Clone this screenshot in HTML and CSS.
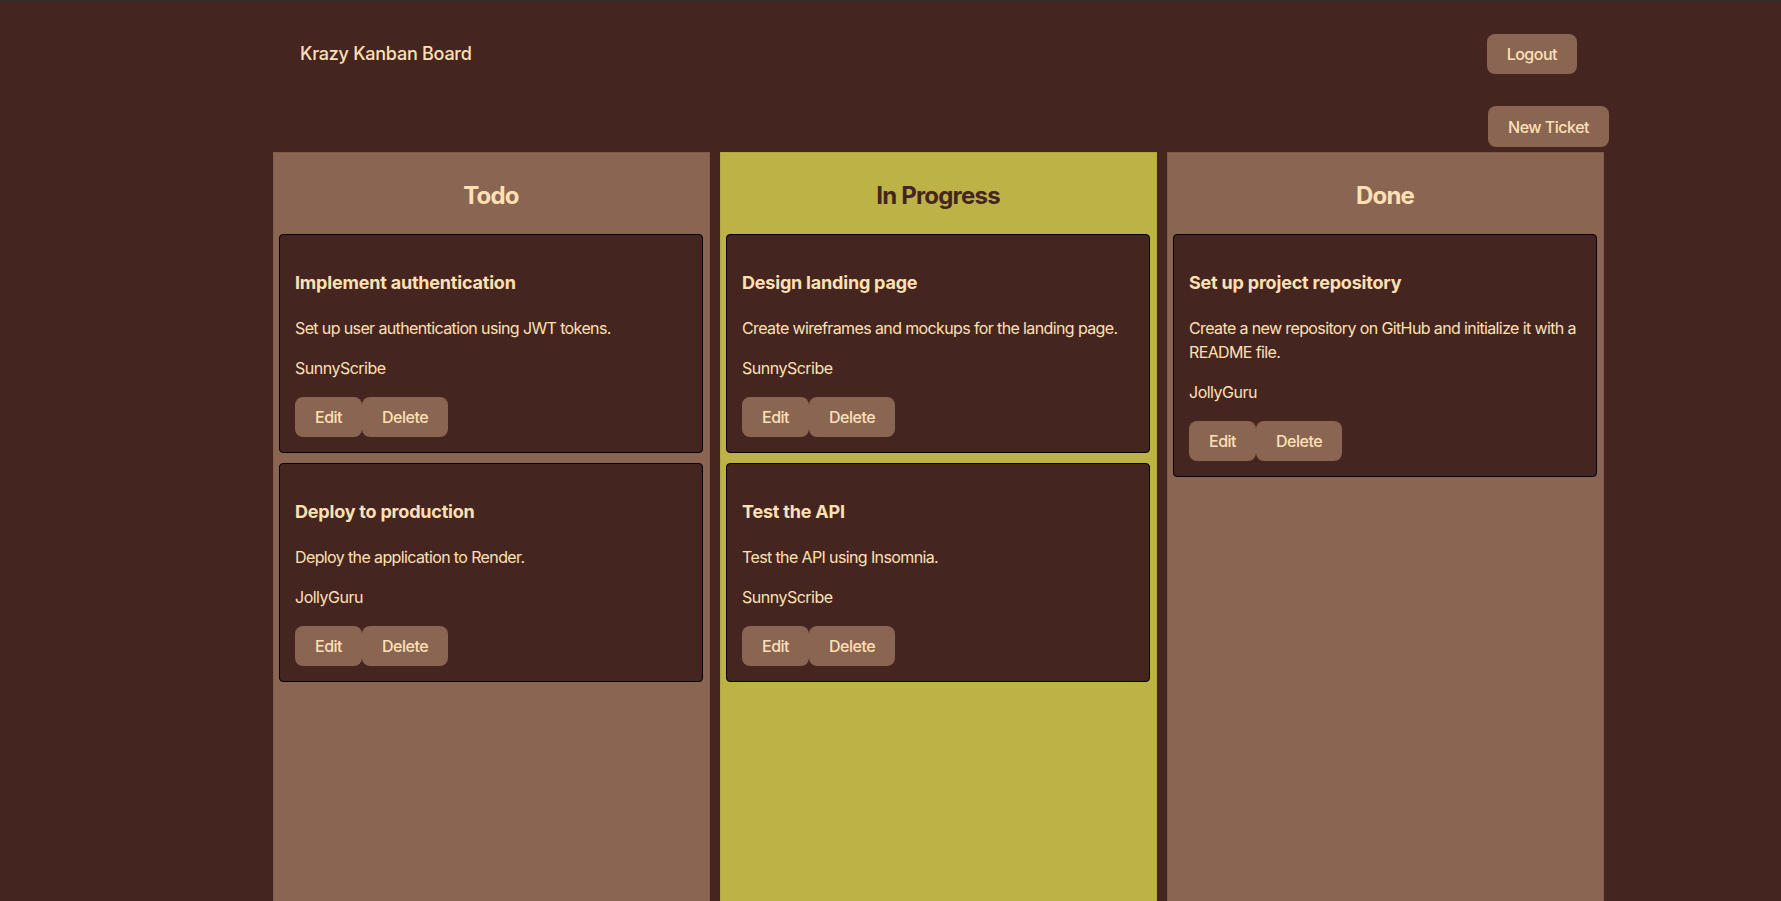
FILE: index.html
```html
<!DOCTYPE html>
<html lang="en">
<head>
<meta charset="utf-8">
<title>Krazy Kanban Board</title>
<link rel="stylesheet" href="styles.css">
</head>
<body>
<div class="page">
  <header class="nav">
    <h1 class="brand">Krazy Kanban Board</h1>
    <button class="btn">Logout</button>
  </header>
  <div class="toolbar">
    <button class="btn btn-new">New Ticket</button>
  </div>
  <main class="board">
    <section class="column">
      <h2 class="col-title">Todo</h2>
      <article class="card">
        <h3 class="card-title">Implement authentication</h3>
        <p class="card-desc">Set up user authentication using JWT tokens.</p>
        <p class="card-user">SunnyScribe</p>
        <div class="actions"><button class="btn">Edit</button><button class="btn">Delete</button></div>
      </article>
      <article class="card">
        <h3 class="card-title">Deploy to production</h3>
        <p class="card-desc">Deploy the application to Render.</p>
        <p class="card-user">JollyGuru</p>
        <div class="actions"><button class="btn">Edit</button><button class="btn">Delete</button></div>
      </article>
    </section>
    <section class="column column-progress">
      <h2 class="col-title">In Progress</h2>
      <article class="card">
        <h3 class="card-title">Design landing page</h3>
        <p class="card-desc">Create wireframes and mockups for the landing page.</p>
        <p class="card-user">SunnyScribe</p>
        <div class="actions"><button class="btn">Edit</button><button class="btn">Delete</button></div>
      </article>
      <article class="card">
        <h3 class="card-title">Test the API</h3>
        <p class="card-desc">Test the API using Insomnia.</p>
        <p class="card-user">SunnyScribe</p>
        <div class="actions"><button class="btn">Edit</button><button class="btn">Delete</button></div>
      </article>
    </section>
    <section class="column">
      <h2 class="col-title">Done</h2>
      <article class="card">
        <h3 class="card-title">Set up project repository</h3>
        <p class="card-desc">Create a new repository on GitHub and initialize it with a README file.</p>
        <p class="card-user">JollyGuru</p>
        <div class="actions"><button class="btn">Edit</button><button class="btn">Delete</button></div>
      </article>
    </section>
  </main>
</div>
</body>
</html>
```
FILE: styles.css
```css
* { box-sizing: border-box; }
html, body { height: 100%; }
body {
  margin: 0;
  background: #452520;
  border-top: 1px solid #303030;
  font-family: Inter, "Noto Sans", sans-serif;
  color: #ffe0b5;
  overflow: hidden;
}
.page {
  margin-left: 273px;
  width: 1336px;
}
.nav {
  display: flex;
  align-items: center;
  justify-content: space-between;
  padding: 32px 32px 0 27px;
  height: 73px;
}
.brand {
  margin: 0;
  font-size: 18px;
  font-weight: 500;
  line-height: 40px;
  letter-spacing: -0.25px;
}
.btn {
  font-family: inherit;
  font-size: 16px;
  font-weight: 500;
  letter-spacing: -0.5px;
  color: #ffe0b5;
  background: #8a6552;
  border: none;
  border-radius: 8px;
  padding: 10px 20px;
  line-height: 20px;
  cursor: pointer;
}
.toolbar {
  display: flex;
  justify-content: flex-end;
  margin-top: 32px;
  height: 46px;
}
.btn-new { height: 41px; }
.board {
  display: grid;
  grid-template-columns: repeat(3, 437px);
  gap: 10px;
  width: 1331px;
}
.column {
  background: #8a6552;
  border: 1px solid #7f5d4c;
  padding: 0 6px 0 5px;
  min-height: 760px;
}
.column-progress {
  background: #bdb246;
  border-color: #b3a943;
}
.column-progress .col-title { color: #452520; }
.col-title {
  text-align: center;
  margin: 28px 0 24px;
  font-size: 24px;
  font-weight: 700;
  line-height: 29px;
  letter-spacing: -0.8px;
}
.card {
  background: #452520;
  border: 1px solid #000;
  border-radius: 4px;
  padding: 34px 14px 15px 15px;
  margin-bottom: 10px;
}
.card-title {
  margin: 0;
  font-size: 18px;
  font-weight: 700;
  line-height: 27px;
  letter-spacing: -0.2px;
}
.card-desc {
  margin: 20px 0 0;
  font-size: 16px;
  line-height: 24px;
  letter-spacing: -0.62px;
}
.card-user {
  margin: 16px 0 0;
  font-size: 16px;
  line-height: 24px;
  letter-spacing: -0.5px;
}
.actions {
  display: flex;
  margin-top: 17px;
}
```
